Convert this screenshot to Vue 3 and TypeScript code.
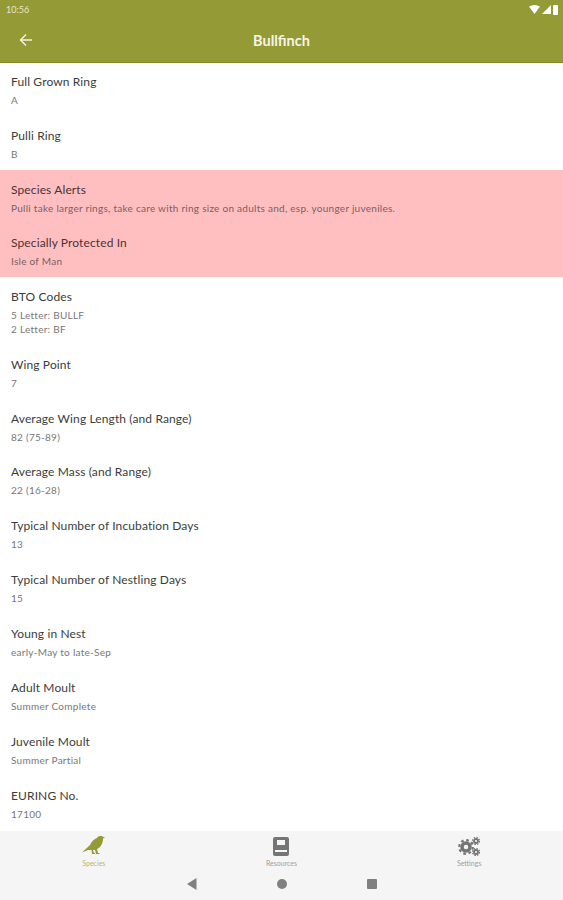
<script setup lang="ts">
interface Row {
  label: string
  values: string[]
}

const topRows: Row[] = [
  { label: 'Full Grown Ring', values: ['A'] },
  { label: 'Pulli Ring', values: ['B'] },
]

const alertRows: Row[] = [
  { label: 'Species Alerts', values: ['Pulli take larger rings, take care with ring size on adults and, esp. younger juveniles.'] },
  { label: 'Specially Protected In', values: ['Isle of Man'] },
]

const bottomRows: Row[] = [
  { label: 'BTO Codes', values: ['5 Letter: BULLF', '2 Letter: BF'] },
  { label: 'Wing Point', values: ['7'] },
  { label: 'Average Wing Length (and Range)', values: ['82 (75-89)'] },
  { label: 'Average Mass (and Range)', values: ['22 (16-28)'] },
  { label: 'Typical Number of Incubation Days', values: ['13'] },
  { label: 'Typical Number of Nestling Days', values: ['15'] },
  { label: 'Young in Nest', values: ['early-May to late-Sep'] },
  { label: 'Adult Moult', values: ['Summer Complete'] },
  { label: 'Juvenile Moult', values: ['Summer Partial'] },
  { label: 'EURING No.', values: ['17100'] },
]
</script>

<template>
  <div class="screen">
    <header class="appbar">
      <div class="status">
        <span class="time">10:56</span>
        <div class="status-icons">
          <svg width="11" height="9" viewBox="0 0 11 9"><path d="M0 1.5Q5.500-1.500 11 1.500L5.500 9Z" fill="#fff" /></svg>
          <svg width="9" height="9" viewBox="0 0 9 9"><path d="M9 0V9H0Z" fill="#fff" /></svg>
          <svg width="5" height="10" viewBox="0 0 5 10"><rect width="5" height="10" rx="1" fill="#fff" /></svg>
        </div>
      </div>
      <div class="toolbar">
        <svg class="back" width="14" height="14" viewBox="0 0 14 14">
          <path d="M13 7H2M7 1.500 1.500 7 7 12.500" fill="none" stroke="#f4f5e6" stroke-width="1.400" />
        </svg>
        <span class="title">Bullfinch</span>
      </div>
    </header>

    <main class="list">
      <div v-for="row in topRows" :key="row.label" class="row">
        <div class="label">{{ row.label }}</div>
        <div v-for="v in row.values" :key="v" class="value">{{ v }}</div>
      </div>
      <div class="alerts">
        <div v-for="row in alertRows" :key="row.label" class="row">
          <div class="label">{{ row.label }}</div>
          <div v-for="v in row.values" :key="v" class="value">{{ v }}</div>
        </div>
      </div>
      <div v-for="row in bottomRows" :key="row.label" class="row">
        <div class="label">{{ row.label }}</div>
        <div v-for="v in row.values" :key="v" class="value">{{ v }}</div>
      </div>
    </main>

    <footer class="bottom">
      <nav class="tabs">
        <div class="tab active">
          <svg width="24" height="21" viewBox="0 0 24 21">
            <path d="M0 17.500 8 10C10 6 12 4 15 3 16 1 19 .5 20.500 1.500L23 2.500 21 3.500C21 8 19 12 15 14L16 18H17.500V19H14L13 15H11L12 18H13V19H10L9.500 15 6 15Z" fill="#949a35" />
          </svg>
          <span>Species</span>
        </div>
        <div class="tab">
          <svg width="16" height="19" viewBox="0 0 16 19">
            <path fill-rule="evenodd" d="M2 0H14A2 2 0 0 1 16 2V17A2 2 0 0 1 14 19H2A2 2 0 0 1 0 17V2A2 2 0 0 1 2 0ZM4 3V8H12V3ZM2 13V15H14V13Z" fill="#757575" />
          </svg>
          <span>Resources</span>
        </div>
        <div class="tab">
          <svg width="22" height="19" viewBox="0 0 22 19">
            <g fill="none" stroke="#757575">
              <circle cx="8" cy="10" r="4" stroke-width="3.500" />
              <circle cx="8" cy="10" r="6.800" stroke-width="2.200" stroke-dasharray="2.700 2.640" />
              <circle cx="18" cy="4" r="2" stroke-width="1.800" />
              <circle cx="18" cy="4" r="3.500" stroke-width="1.200" stroke-dasharray="1.500 1.250" />
              <circle cx="18" cy="15" r="2" stroke-width="1.800" />
              <circle cx="18" cy="15" r="3.500" stroke-width="1.200" stroke-dasharray="1.500 1.250" />
            </g>
          </svg>
          <span>Settings</span>
        </div>
      </nav>
      <div class="sysnav">
        <svg width="10" height="12" viewBox="0 0 10 12"><path d="M9.500 0V12L0 6Z" fill="#808080" /></svg>
        <svg width="10" height="10" viewBox="0 0 10 10"><circle cx="5" cy="5" r="5" fill="#808080" /></svg>
        <svg width="10" height="10" viewBox="0 0 10 10"><rect width="10" height="10" rx="1" fill="#808080" /></svg>
      </div>
    </footer>
  </div>
</template>

<style>
body {
  margin: 0;
}
</style>

<style scoped>
.screen {
  width: 563px;
  height: 900px;
  display: flex;
  flex-direction: column;
  overflow: hidden;
  background: #fff;
  font-family: Lato, "Open Sans", sans-serif;
}

.appbar {
  height: 62.600px;
  box-sizing: border-box;
  flex-shrink: 0;
  background: #949a35;
  border-bottom: 1px solid #858c20;
  color: #fff;
}

.status {
  height: 19px;
  display: flex;
  align-items: center;
  justify-content: space-between;
  padding: 0 5px 0 6px;
}

.time {
  font-size: 9px;
  color: #e6e8c8;
}

.status-icons {
  display: flex;
  align-items: center;
  gap: 2px;
}

.toolbar {
  position: relative;
  height: 43px;
  display: flex;
  align-items: center;
  justify-content: center;
}

.back {
  position: absolute;
  left: 19px;
  top: 14px;
}

.title {
  font-size: 14.500px;
  font-weight: 700;
  color: #f4f5e6;
}

.list {
  flex: 1;
  min-height: 0;
}

.row {
  padding: 12.600px 11px 9.100px;
  min-height: 32px;
}

.alerts ~ .row {
  padding-bottom: 9.250px;
}

.label {
  font-size: 12px;
  letter-spacing: 0.120px;
  line-height: 14px;
  color: #3c3c3c;
  margin-bottom: 4px;
}

.value {
  font-size: 10px;
  letter-spacing: 0.270px;
  line-height: 14px;
  color: #777;
}

.alerts {
  background: #ffbfc1;
}

.alerts .label {
  color: #4a3335;
}

.alerts .value {
  color: #7a6062;
}

.bottom {
  height: 69px;
  flex-shrink: 0;
  background: #f5f5f5;
}

.tabs {
  height: 36px;
  display: grid;
  grid-template-columns: repeat(3, 1fr);
}

.tab {
  display: flex;
  flex-direction: column;
  align-items: center;
  justify-content: flex-end;
  gap: 3px;
  font-size: 7px;
  color: #a0a0a0;
}

.tab.active {
  color: #b4b87c;
}

.sysnav {
  height: 33px;
  display: flex;
  align-items: center;
  justify-content: center;
  gap: 80px;
}
</style>
